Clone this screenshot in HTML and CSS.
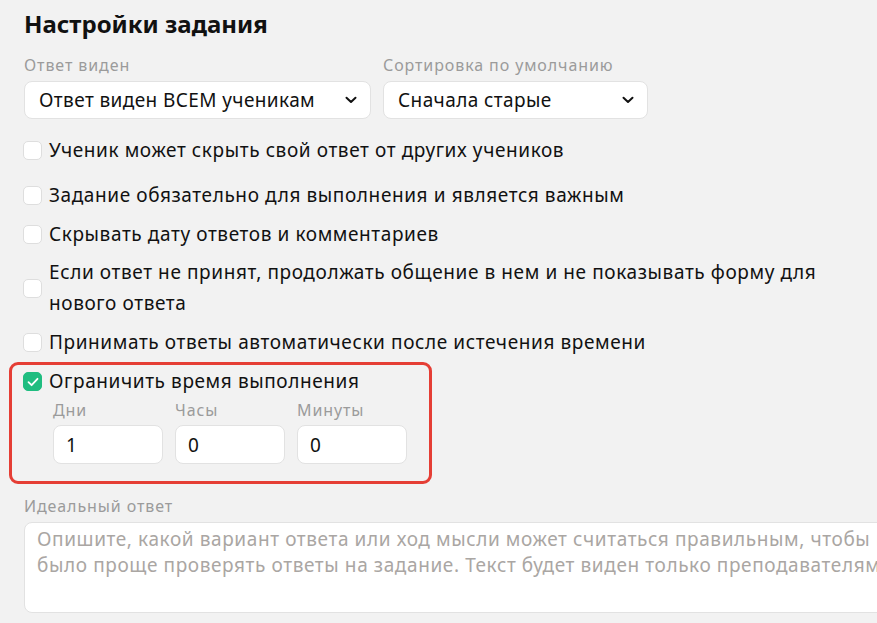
FILE: index.html
```html
<!DOCTYPE html>
<html lang="ru">
<head>
    <meta charset="UTF-8">
    <meta name="viewport" content="width=device-width, initial-scale=1.0">
    <title>Настройки задания</title>
    <link rel="stylesheet" href="styles.css">
</head>
<body>
    <div class="settings">
        <h2 class="title">Настройки задания</h2>

        <div class="selects">
            <div class="field">
                <span class="field-label">Ответ виден</span>
                <div class="select select-wide">
                    <span>Ответ виден ВСЕМ ученикам</span>
                    <svg class="chevron" width="12" height="8" viewBox="0 0 12 8"><path d="M1.5 1.8L6 6L10.5 1.8" fill="none" stroke="#111" stroke-width="2" stroke-linecap="round" stroke-linejoin="round"/></svg>
                </div>
            </div>
            <div class="field">
                <span class="field-label">Сортировка по умолчанию</span>
                <div class="select select-narrow">
                    <span>Сначала старые</span>
                    <svg class="chevron" width="12" height="8" viewBox="0 0 12 8"><path d="M1.5 1.8L6 6L10.5 1.8" fill="none" stroke="#111" stroke-width="2" stroke-linecap="round" stroke-linejoin="round"/></svg>
                </div>
            </div>
        </div>

        <div class="options">
            <label class="option">
                <span class="box"></span>
                <span>Ученик может скрыть свой ответ от других учеников</span>
            </label>
            <label class="option">
                <span class="box"></span>
                <span>Задание обязательно для выполнения и является важным</span>
            </label>
            <label class="option">
                <span class="box"></span>
                <span>Скрывать дату ответов и комментариев</span>
            </label>
            <label class="option">
                <span class="box"></span>
                <span>Если ответ не принят, продолжать общение в нем и не показывать форму для<br>нового ответа</span>
            </label>
            <label class="option">
                <span class="box"></span>
                <span>Принимать ответы автоматически после истечения времени</span>
            </label>
        </div>

        <div class="time-limit">
            <label class="option">
                <span class="box checked">
                    <svg width="12" height="10" viewBox="0 0 12 10"><path d="M1.5 5.2L4.6 8.2L10.5 1.8" fill="none" stroke="#fff" stroke-width="1.8" stroke-linecap="round" stroke-linejoin="round"/></svg>
                </span>
                <span>Ограничить время выполнения</span>
            </label>
            <div class="time-fields">
                <div class="field">
                    <span class="field-label">Дни</span>
                    <div class="num-input">1</div>
                </div>
                <div class="field">
                    <span class="field-label">Часы</span>
                    <div class="num-input">0</div>
                </div>
                <div class="field">
                    <span class="field-label">Минуты</span>
                    <div class="num-input">0</div>
                </div>
            </div>
        </div>

        <div class="field ideal">
            <span class="field-label">Идеальный ответ</span>
            <textarea class="ideal-text" placeholder="Опишите, какой вариант ответа или ход мысли может считаться правильным, чтобы потом&#10;было проще проверять ответы на задание. Текст будет виден только преподавателям."></textarea>
        </div>
    </div>
</body>
</html>
```

FILE: styles.css
```css
html, body {
    margin: 0;
    padding: 0;
    background-color: #f2f2f2;
    overflow: hidden;
}

body {
    font-family: "Noto Sans", Arial, sans-serif;
    color: #111;
    font-size: 19px;
    letter-spacing: 0.6px;
}

.settings {
    padding: 0 0 0 24px;
    width: 1100px;
}

.title {
    margin: 0;
    padding-top: 7px;
    font-size: 24px;
    font-weight: 700;
    line-height: 34px;
    letter-spacing: 0;
}

.field {
    display: flex;
    flex-direction: column;
}

.field-label {
    color: #9b9b9b;
    font-size: 16px;
    letter-spacing: 0.9px;
    line-height: 20px;
    margin-bottom: 6px;
}

.selects {
    display: flex;
    gap: 12px;
    margin-top: 14px;
}

.select {
    box-sizing: border-box;
    height: 38px;
    background: white;
    border: 1px solid #e2e2e2;
    border-radius: 8px;
    display: flex;
    align-items: center;
    justify-content: space-between;
    padding: 0 13px 0 14px;
    letter-spacing: 0.4px;
}

.select-wide {
    width: 347px;
}

.select-narrow {
    width: 265px;
}

.options {
    display: flex;
    flex-direction: column;
    gap: 8px;
    margin-top: 16px;
}

.option {
    display: flex;
    align-items: center;
    gap: 7px;
    line-height: 31px;
    cursor: pointer;
}

.options .option:nth-child(2) {
    margin-top: 6px;
}

.options .option:nth-child(4) {
    margin-top: -1px;
}

.box {
    box-sizing: border-box;
    flex: none;
    width: 19px;
    height: 19px;
    margin-left: -1px;
    background: white;
    border: 1px solid #dedede;
    border-radius: 5px;
    display: flex;
    align-items: center;
    justify-content: center;
}

.box.checked {
    background: #1fbd80;
    border-color: #1fbd80;
}

.time-limit {
    box-sizing: border-box;
    width: 423px;
    margin: 4px 0 0 -15px;
    padding: 1px 0 17px 12px;
    border: 3px solid #e53e35;
    border-radius: 9px;
}

.time-fields {
    display: flex;
    gap: 12px;
    margin: 3px 0 0 29px;
}

.time-fields .field-label {
    margin-bottom: 5px;
}

.num-input {
    box-sizing: border-box;
    width: 110px;
    height: 39px;
    background: white;
    border: 1px solid #e2e2e2;
    border-radius: 8px;
    padding: 0 12px;
    display: flex;
    align-items: center;
}

.ideal {
    margin-top: 12px;
}

.ideal-text {
    box-sizing: border-box;
    width: 1000px;
    height: 91px;
    margin: 0;
    padding: 3px 12px;
    background: white;
    border: 1px solid #e2e2e2;
    border-radius: 8px;
    font-family: inherit;
    font-size: 19px;
    letter-spacing: 0.6px;
    line-height: 26px;
    resize: none;
    white-space: pre;
}

.ideal-text::placeholder {
    color: #aaa6a3;
}
```
